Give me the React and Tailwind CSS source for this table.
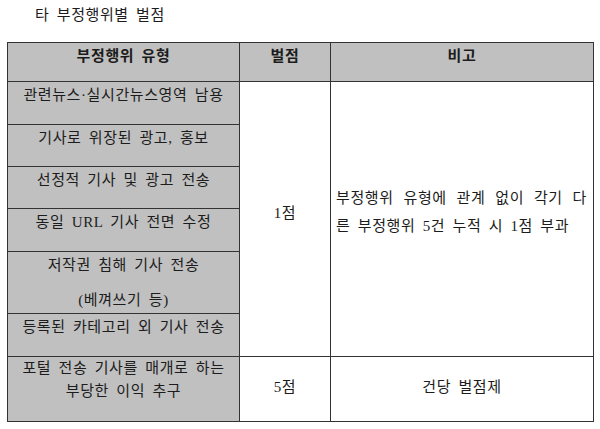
import React from 'react';

const rows = [
    { h: 'h-[43px]', lines: ['관련뉴스·실시간뉴스영역 남용'] },
    { h: 'h-[42px]', lines: ['기사로 위장된 광고, 홍보'] },
    { h: 'h-[42px]', lines: ['선정적 기사 및 광고 전송'] },
    { h: 'h-[43px]', lines: ['동일 URL 기사 전면 수정'] },
    { h: 'h-[62px]', lines: ['저작권 침해 기사 전송', '(베껴쓰기 등)'], gap: true },
    { h: 'h-[43px]', lines: ['등록된 카테고리 외 기사 전송'] },
];

const cell = 'border border-[#333] p-0';

const App = () => {
    return (
        <div className="w-[600px] h-[429px] bg-white text-[#1c1c1c] font-['Liberation_Serif','Noto_Sans_CJK_KR',sans-serif] text-[15px] tracking-[0.6px] [word-spacing:3px]">
            {/* Title */}
            <div className="pl-[35px] pt-[3px] leading-[24px]">타 부정행위별 벌점</div>

            {/* Table */}
            <table className="ml-[7px] mt-[15px] w-[586px] table-fixed border-collapse">
                <colgroup>
                    <col className="w-[232px]" />
                    <col className="w-[91px]" />
                    <col className="w-[263px]" />
                </colgroup>
                <thead>
                    <tr className="h-[39px] bg-[#c0c0c0]">
                        <th className={`${cell} align-top pt-[1px] leading-[24px] font-bold`}>부정행위 유형</th>
                        <th className={`${cell} align-top pt-[1px] leading-[24px] font-bold`}>벌점</th>
                        <th className={`${cell} align-top pt-[1px] leading-[24px] font-bold`}>비고</th>
                    </tr>
                </thead>
                <tbody>
                    {rows.map((row, i) => (
                        <tr key={i} className={row.h}>
                            <td className={`${cell} bg-[#c0c0c0] align-top text-center pt-[1px] leading-[24px] whitespace-nowrap`}>
                                {row.lines.map((line, j) => (
                                    <div key={j} className={row.gap && j > 0 ? 'mt-[11px]' : ''}>{line}</div>
                                ))}
                            </td>
                            {i === 0 && (
                                <>
                                    <td rowSpan={6} className={`${cell} text-center align-middle pb-[12px]`}>1점</td>
                                    <td rowSpan={6} className={`${cell} align-middle pl-[5px] pb-[14px] leading-[28px]`}>
                                        <div className="w-[251px] text-justify [text-align-last:justify]">부정행위 유형에 관계 없이 각기 다</div>
                                        <div className="whitespace-nowrap">른 부정행위 5건 누적 시 1점 부과</div>
                                    </td>
                                </>
                            )}
                        </tr>
                    ))}
                    <tr className="h-[65px]">
                        <td className={`${cell} bg-[#c0c0c0] align-top text-center leading-[23px]`}>
                            <div>포털 전송 기사를 매개로 하는</div>
                            <div>부당한 이익 추구</div>
                        </td>
                        <td className={`${cell} text-center align-middle pb-[4px]`}>5점</td>
                        <td className={`${cell} text-center align-middle pb-[4px]`}>건당 벌점제</td>
                    </tr>
                </tbody>
            </table>
        </div>
    );
};

export default App;
